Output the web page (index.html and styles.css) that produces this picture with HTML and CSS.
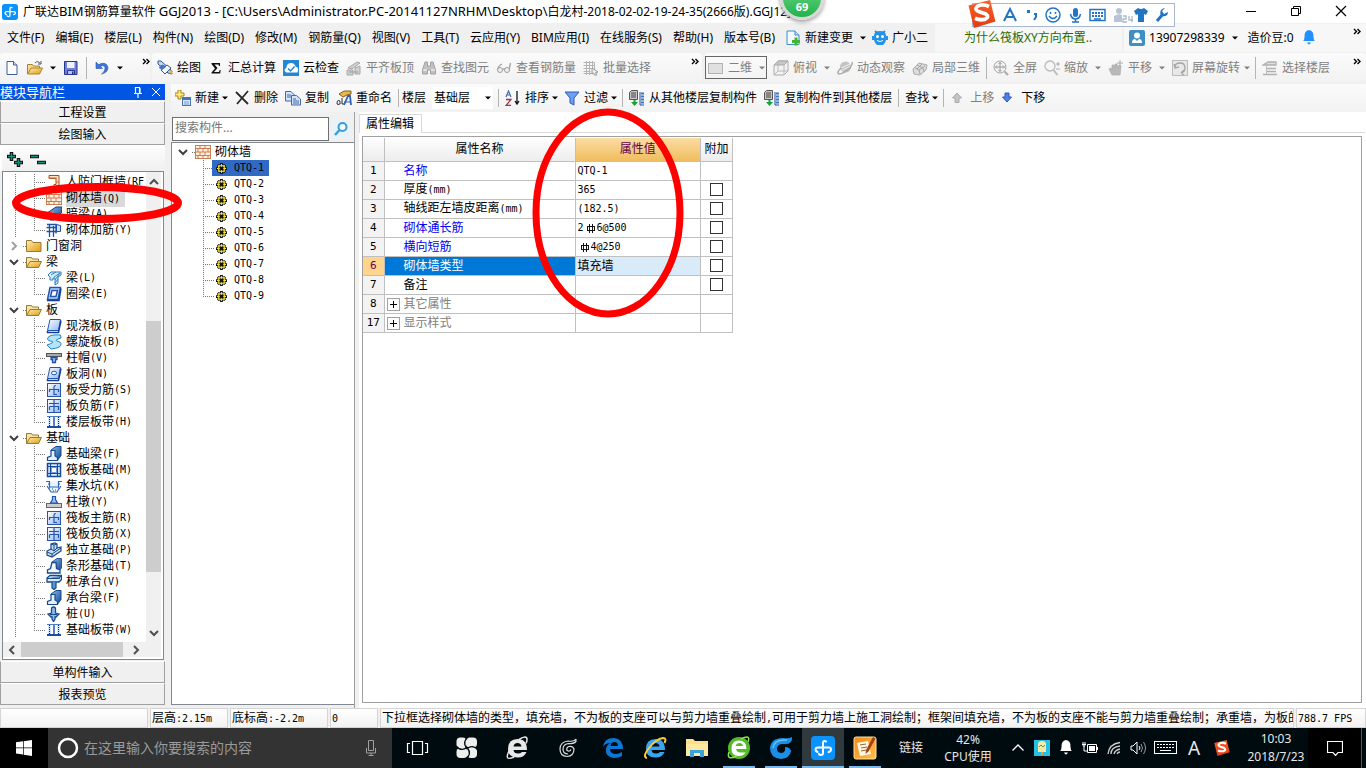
FILE: index.html
```html
<!DOCTYPE html>
<html lang="zh-CN">
<head>
<meta charset="utf-8">
<title>广联达BIM钢筋算量软件 GGJ2013</title>
<link rel="stylesheet" href="styles.css">
</head>
<body>
<svg class="defs" aria-hidden="true">
<defs>
<linearGradient id="gBlue" x1="0" y1="0" x2="1" y2="1"><stop offset="0" stop-color="#fff"/><stop offset="1" stop-color="#8fb6f2"/></linearGradient>
<linearGradient id="gDeep" x1="0" y1="0" x2="1" y2="1"><stop offset="0" stop-color="#8cc0f0"/><stop offset="1" stop-color="#0b3f8c"/></linearGradient>
<linearGradient id="gGold" x1="0" y1="0" x2="1" y2="1"><stop offset="0" stop-color="#ffeeb0"/><stop offset="1" stop-color="#e09a10"/></linearGradient>
<linearGradient id="gSogou" x1="0" y1="0" x2="0" y2="1"><stop offset="0" stop-color="#f8602c"/><stop offset="1" stop-color="#e23c10"/></linearGradient>
<linearGradient id="gPad" x1="0" y1="0" x2="1" y2="1"><stop offset="0" stop-color="#f08a1c"/><stop offset="1" stop-color="#ffc04a"/></linearGradient>
</defs>
<symbol id="logo" viewBox="0 0 24 24"><rect width="24" height="24" rx="4" fill="#0a92ff"/><path d="M15 5.500q-3-1.500-3 1.500v9.500q0 2.500-2 2.500-1.500 0-2-1M6.500 16q-2-1-2-2.500 0-2 2.500-2h11q2 0 2 2t-2.500 2.500" fill="none" stroke="#fff" stroke-width="2" stroke-linecap="round"/></symbol>
<symbol id="page" viewBox="0 0 16 16"><path d="M3 1.500h6.500l3.500 3.500v9.500h-10z" fill="#fff" stroke="#3f5f8f"/><path d="M9.500 1.500v3.500h3.500" fill="#cfe0f5" stroke="#3f5f8f"/></symbol>
<symbol id="open" viewBox="0 0 16 16"><path d="M.5 14V4.500h5l1 1.500h6v3" fill="#f6d98a" stroke="#a88432"/><path d="M.5 14l3.500-6h11.500l-3 6z" fill="url(#gGold)" stroke="#a88432"/><path d="M8 3q3-3 5 .5M14 1v3h-3" fill="none" stroke="#456"/></symbol>
<symbol id="save" viewBox="0 0 16 16"><path d="M1.500 1.500h12.500v13h-12.500z" fill="#6f83d6" stroke="#26348c"/><path d="M4 2h7.500v6H4z" fill="#eef1ff"/><path d="M4.500 10.500h7v4h-7z" fill="#b9c3ee" stroke="#26348c"/><path d="M9 11.500h1.500v2.500H9z" fill="#26348c"/></symbol>
<symbol id="undo" viewBox="0 0 16 16"><path d="M2 2v6.500h6.500L6.300 6.300q5-2 4.700 2.700-.5 3-3.500 5 6.500-1.500 6.500-6.500Q12.500 1 4.500 4.500z" fill="#3d76d8" stroke="#2456b4" stroke-width=".6"/></symbol>
<symbol id="more" viewBox="0 0 8 8"><path d="M1 1l2.500 2.500L1 6M4.500 1L7 3.500 4.500 6" fill="none" stroke="currentColor" stroke-width="1.400"/></symbol>
<symbol id="caret" viewBox="0 0 6 4"><path d="M0 .5h6L3 3.500z" fill="currentColor"/></symbol>
<symbol id="draw" viewBox="0 0 16 16"><path d="M1 1l3 0 10 9 1 4-4-1L1 4z" fill="#c2d6f5" stroke="#38588c"/><path d="M4 10l6-5 4 3-6 6z" fill="#f2f7ff" stroke="#38588c"/><path d="M2 8q1-4 5-3l2 2-4 3z" fill="#4a74bf"/><path d="M12 10l2 5 2-4z" fill="#e4b02c"/></symbol>
<symbol id="sum" viewBox="0 0 16 16"><path d="M3.500 3H12v3h-1l-.5-1.500H6.500L9.500 8l-3.500 4h5l.7-2h1l-.5 3.500H3.500v-1L7 8.500 3.500 4z" fill="#111"/></symbol>
<symbol id="cloud" viewBox="0 0 16 16"><rect width="16" height="16" fill="#2487d6"/><path d="M3.500 12.500q-4-2 0-5 0-4 4-4.500 4-.5 5 3.500 4 1 2 6z" fill="#fff"/><path d="M5 8.500l2.500 2.500L11.500 6.500" fill="none" stroke="#2487d6" stroke-width="1.500"/></symbol>
<symbol id="align" viewBox="0 0 16 16"><path d="M2 8l9-6 3 1-8 6zM1 10h6v5H1zM9 8l5-2v8H9z" fill="#d0d0d0" stroke="#a6a6a6"/><path d="M3 12h9" stroke="#999"/></symbol>
<symbol id="find" viewBox="0 0 16 16"><path d="M4 2h2.500v4h3V2H12l2.500 8v4h-5v-4h-3v4h-5v-4z" fill="#c2c2c2" stroke="#a0a0a0"/><path d="M2 10h4M10 10h4" stroke="#fff"/></symbol>
<symbol id="glasses" viewBox="0 0 16 16"><path d="M6 4Q2 6 1.500 10M14.500 3L13 10M7 9l2 0" fill="none" stroke="#a0a0a0" stroke-width="1.300"/><circle cx="4" cy="10" r="2.500" fill="#eee" stroke="#a0a0a0"/><circle cx="11" cy="10" r="2.500" fill="#eee" stroke="#a0a0a0"/></symbol>
<symbol id="batch" viewBox="0 0 16 16"><path d="M.5 2.500h11v11H.5M.5 5.500h11M.5 8.500h8M.5 11.500h7M3.500 1v14M6.500 1v14M9.500 1v7" stroke="#b4b4b4" fill="none"/><path d="M9 8l6 4-2.500.5 1.500 2.500-2.500 0-1-2-1.500 1z" fill="#eee" stroke="#999"/></symbol>
<symbol id="plane" viewBox="0 0 16 16"><rect x=".5" y="3.500" width="14" height="10" fill="#e0e0e0" stroke="#b2b2b2"/></symbol>
<symbol id="cube" viewBox="0 0 16 16"><path d="M1 5l4-4h10v10l-4 4H1z" fill="#f3f3f3" stroke="#aaa"/><path d="M1 5l4-4h10l-4 4z" fill="#c8c8c8" stroke="#aaa"/><path d="M11 5v10M5 1v10H15M5 11l-4 4" fill="none" stroke="#b8b8b8"/></symbol>
<symbol id="orbit" viewBox="0 0 16 16"><circle cx="8.500" cy="7" r="5.500" fill="#c4c4c4"/><path d="M4 8L13 4M5 10l9-4" stroke="#eee"/><path d="M4 8q-5 5-2 6 4 0 11-6 3-4 2-6" fill="none" stroke="#aaa" stroke-width="1.500"/></symbol>
<symbol id="part3d" viewBox="0 0 16 16"><path d="M1 9l6-6 8 2-1 5-6 5-6-1z" fill="#ddd" stroke="#aaa"/><path d="M3 8l4 2 1 4M7 10l6-4M5 5l6 3 1 4M10 4L5 9" fill="none" stroke="#a4a4a4"/></symbol>
<symbol id="full" viewBox="0 0 16 16"><circle cx="7" cy="7" r="6" fill="#f4f4f4" stroke="#a5a5a5"/><path d="M7 2.500v9M2.500 7h9M5.500 4L7 2.500 8.500 4M5.500 10L7 11.500 8.500 10M4 5.500L2.500 7 4 8.500M10 5.500L11.500 7 10 8.500" fill="none" stroke="#999"/><path d="M11.500 11.500L15 15" stroke="#aaa" stroke-width="2"/></symbol>
<symbol id="zoomi" viewBox="0 0 16 16"><circle cx="6" cy="6" r="5" fill="#f6f6f6" stroke="#bbb" stroke-width="1.300"/><path d="M9.500 10l4 5" stroke="#bbb" stroke-width="2"/><path d="M12 4h4M14 2v4M12 9h4" stroke="#aaa"/></symbol>
<symbol id="hand" viewBox="0 0 16 16"><path d="M4 15l-3-6 2-1 1 2V5l2 0 1 3V4h2l.5 4L11 5l2 1-1 9z" fill="#b8b8b8" stroke="#aaa" stroke-width=".7"/><path d="M12 0v6M9 3h6" stroke="#aaa"/></symbol>
<symbol id="rot" viewBox="0 0 16 16"><rect x=".5" y=".5" width="15" height="15" fill="#e8e8e8" stroke="#bbb"/><path d="M3 7q0-4 5-4 5 0 5 5 0 4-4 5M9 13l3 2M9 13l3-3M2 4l1 4 4-1" fill="none" stroke="#a4a4a4" stroke-width="1.300"/></symbol>
<symbol id="floors" viewBox="0 0 16 16"><path d="M1 5l5-3h8v3zM5 8.500h9M5 11.500h9M1 14.500h14" fill="#ddd" stroke="#b0b0b0" stroke-width="1.300"/><path d="M4.500 5v9" stroke="#c0c0c0"/></symbol>
<symbol id="new" viewBox="0 0 16 16"><path d="M3 0h3v3h3v3H6v3H3V6H0V3h3z" fill="#ffe97a" stroke="#ab8617"/><rect x="7.500" y="7.500" width="8" height="8" fill="#dbe8fb" stroke="#4874b4"/><path d="M7.500 9h8" stroke="#4874b4" stroke-width="2"/><path d="M9 12h5M9 14h5" stroke="#7897c4"/></symbol>
<symbol id="del" viewBox="0 0 16 16"><path d="M2 2l12 12M14 1L3 14" stroke="#2b2b2b" stroke-width="1.800"/></symbol>
<symbol id="copy" viewBox="0 0 16 16"><path d="M.5 1.500H6L9.500 5v6H.5z" fill="#d4e3fa" stroke="#4568a8"/><path d="M6.500 5.500h5l4 3.500v6h-9z" fill="#d4e3fa" stroke="#4568a8"/><path d="M2 5h4M2 7h4M8 9h3M8 11h6M8 13h6" stroke="#4568a8"/></symbol>
<symbol id="rename" viewBox="0 0 16 16"><path d="M3 4l5-3 7 0v3l-4 1-4 2z" fill="#e6b64a" stroke="#86601b"/><path d="M1 14q0-5 3-3v3q-3 1-3 0M6 8v6q4 0 3-3" fill="none" stroke="#333"/><path d="M8 15l4-9h2l1 9" fill="none" stroke="#3262b7" stroke-width="1.800"/><path d="M10 12h4" stroke="#3262b7"/></symbol>
<symbol id="sort" viewBox="0 0 16 16"><path d="M1 7L3.500 1 6 7M2 5h3" fill="none" stroke="#3d6cb8" stroke-width="1.200"/><path d="M1 9.500h5l-5 6h5" fill="none" stroke="#a03344" stroke-width="1.300"/><path d="M12 1v13M10 11l2 3 2-3" fill="none" stroke="#111" stroke-width="1.300"/></symbol>
<symbol id="filter" viewBox="0 0 16 16"><path d="M1 2h14L10 8v7l-4-2V8z" fill="#6f9ff0" stroke="#2a5cba"/></symbol>
<symbol id="xfer" viewBox="0 0 16 16"><path d="M.5 2.500l2-2h6v9h-8z" fill="#c8c8c8" stroke="#555"/><path d="M2 3h5M2 5h5M2 7h5" stroke="#444"/><path d="M15 3.500h-3M15 6.500h-3M15 9.500h-3M15 12.500h-3" stroke="#3c74c8" stroke-width="2"/><path d="M11 2v13h4" fill="none" stroke="#1f4f9c"/><path d="M4.500 10v2H2l3.500 4 3.500-4H6.500v-2z" fill="#15a536"/></symbol>
<symbol id="up" viewBox="0 0 16 16"><path d="M7 3l4.500 5H9v4.500H5V8H2.500z" fill="#c4c4c4" stroke="#aaa"/></symbol>
<symbol id="down" viewBox="0 0 16 16"><path d="M4 3h4v4h2.500L6 12 1.500 7H4z" fill="#4f82e8" stroke="#2a57bd"/></symbol>
<symbol id="change" viewBox="0 0 16 16"><path d="M2 1h8l4 4v9.500H2z" fill="#f4f9ff" stroke="#3d8ccc"/><path d="M10 1v4h4" fill="#bcdcf5" stroke="#3d8ccc"/><path d="M9.500 7.500h3v2.500H15v3h-2.500v2.500h-3V13H7v-3h2.500z" fill="#42b631"/></symbol>
<symbol id="robot" viewBox="0 0 16 16"><path d="M8 1q6 0 6 5h2v4l-2 0q-1 4-3 5H5q-2-1-3-5H0V6h2q0-5 6-5z" fill="#2492e6"/><path d="M3 1l2 2M13 1l-2 2" stroke="#2492e6" stroke-width="2"/><circle cx="5.500" cy="6.500" r="1.500" fill="#fff"/><circle cx="10.500" cy="6.500" r="1.500" fill="#fff"/><path d="M5 10.500q3 2 6 0" stroke="#fff" fill="none"/></symbol>
<symbol id="user" viewBox="0 0 16 16"><rect width="16" height="16" rx="2" fill="#3d8fc4"/><circle cx="8" cy="5.500" r="3" fill="#fff"/><path d="M3 13q0-4 3-4l2 2 2-2q3 0 3 4z" fill="#fff"/></symbol>
<symbol id="bell" viewBox="0 0 16 16"><path d="M8 0q5 1 4.500 7 0 3 1.500 4H2q1.500-1 1.500-4Q3 1 8 0z" fill="currentColor"/><path d="M6 12.500h4q-2 4-4 0z" fill="currentColor"/></symbol>
<symbol id="search" viewBox="0 0 16 16"><circle cx="9.500" cy="6" r="4" fill="#f2faff" stroke="#3d9bd8" stroke-width="2"/><path d="M6.500 9L2 14" stroke="#3d9bd8" stroke-width="2.500"/></symbol>
<symbol id="chev" viewBox="0 0 10 10"><path d="M1 3l4 4 4-4" fill="none" stroke="currentColor" stroke-width="2"/></symbol>
<symbol id="brick" viewBox="0 0 16 16"><rect x=".5" y="1.500" width="15" height="13" fill="#fff0df" stroke="#c87f56"/><path d="M1 4.500h14M1 8h14M1 11.500h14M5 2v2M10 2v2M3 5v3M8 5v3M13 5v3M5 8v3M10 8v3M3 12v2M8 12v2M13 12v2" stroke="#cc7c50" fill="none"/></symbol>
<symbol id="frame" viewBox="0 0 16 16"><path d="M3 1.500h10v13H8v-4h2v-6H3z" fill="#ffe4c8" stroke="#a84c1c"/><path d="M3 4h8M10 12h3M10 8h3" stroke="#c76b36"/></symbol>
<symbol id="gear" viewBox="0 0 12 12"><path d="M4.500 0h3v2L9 1l2 2-1 1.500h2v3h-2L11 9 9 11l-1.500-1v2h-3v-2L3 11 1 9l1-1.500H0v-3h2L1 3l2-2 1.500 1z" fill="#111"/><path d="M5.500 1h1v3h-1zM5.500 8h1v3h-1zM1 5.500h3v1H1zM8 5.500h3v1H8zM2.500 2.500l1.500 1 0 1-1.500-1zM9.500 2.500L8 3.500v1l1.500-1zM2.500 9.500L4 8V9zM9.500 9.500L8 8v1z" fill="#ffee22"/><rect x="3" y="3" width="6" height="6" fill="none" stroke="#f5e220" stroke-width="1.300"/></symbol>
<symbol id="fold" viewBox="0 0 16 16"><path d="M.5 13.500v-11h5l1.500 2h8v9z" fill="url(#gGold)" stroke="#957a3b"/></symbol>
<symbol id="foldo" viewBox="0 0 16 16"><path d="M.5 13.500V3.500h5l1 1.500h6v3" fill="#f9e3a0" stroke="#957a3b"/><path d="M.5 13.500l3.500-6h11.500l-3 6z" fill="url(#gGold)" stroke="#957a3b"/></symbol>
<symbol id="slab" viewBox="0 0 16 16"><path d="M4 1.500h10.500l-2 11H1.500z" fill="url(#gBlue)" stroke="#2456b0"/><path d="M1.500 13v1.500h11l2.500-12" fill="none" stroke="#123f98" stroke-width="1.500"/></symbol>
<symbol id="ring" viewBox="0 0 16 16"><path d="M4 1.500h10.500l-2.500 12H1.500z" fill="#bdd6fa" stroke="#2456b0" stroke-width="1.500"/><path d="M6 4.500h5.500l-1.500 6H4.500z" fill="#fff" stroke="#2456b0" stroke-width="1.500"/><path d="M1 14.500h12l2-12" fill="none" stroke="#123f98" stroke-width="1.500"/></symbol>
<symbol id="hole" viewBox="0 0 16 16"><path d="M4 1.500h10.500l-2 11H1.500z" fill="url(#gBlue)" stroke="#2456b0"/><path d="M1.500 13v1.500h11l2.500-12" fill="none" stroke="#123f98" stroke-width="1.500"/><ellipse cx="8" cy="7" rx="2.500" ry="1.800" fill="#fff" stroke="#1c58c4"/></symbol>
<symbol id="beam" viewBox="0 0 16 16"><path d="M2 5l3-3h10v3l-3 2v6l-3 2V8H7v2H4V7z" fill="#d8eefc" stroke="#2a7abd"/><path d="M5 5l5-3M8 7l6-4M9 10l5-7M9 13l3-4" stroke="#2a86c9" fill="none"/></symbol>
<symbol id="dbeam" viewBox="0 0 16 16"><path d="M1 7l9-6h6v5l-8 8H4V9z" fill="url(#gDeep)" stroke="#143f7c"/><path d="M1 7h7v7" fill="none" stroke="#cde" stroke-width="1"/></symbol>
<symbol id="rebar" viewBox="0 0 16 16"><path d="M.5 5.500h11M.5 9.500h11M3.500 2v13M7.500 4v11M1 2.500h9v9" fill="none" stroke="#1e50a8" stroke-width="1.300"/><path d="M10.500 2.500l4 1v6h-4z" fill="#cfe2f9" stroke="#1e50a8"/></symbol>
<symbol id="spiral" viewBox="0 0 16 16"><path d="M14.500 1Q2 0 1.500 5q0 2 5 2.500 2 1-5.500 3.500l4 4q11-1 10-5.500-.5-2-4-2.500Q8 6 15 4z" fill="#b5e4fa" stroke="#2485c2"/></symbol>
<symbol id="cap" viewBox="0 0 16 16"><rect x=".5" y="3.500" width="15" height="3" fill="#aaa" stroke="#555"/><path d="M5 7.500h6v2H9.500v3h-3v-3H5z" fill="#9cc3f0" stroke="#1b52ad" stroke-width="1.300"/></symbol>
<symbol id="pier" viewBox="0 0 16 16"><rect x=".5" y="9.500" width="15" height="4" fill="#ccc" stroke="#666"/><path d="M6.500 2.500h3v3l2 3.500h-7l2-3.500z" fill="#9cc3f0" stroke="#1b52ad" stroke-width="1.200"/></symbol>
<symbol id="net1" viewBox="0 0 16 16"><rect x="1.500" y="1.500" width="13" height="13" fill="url(#gBlue)" stroke="#2456b0"/><path d="M8 13V5q0-1.500 2-1.500M3.500 10V7.500h9V10M8 12.500h3" fill="none" stroke="#2456b0" stroke-width="1.200"/></symbol>
<symbol id="net2" viewBox="0 0 16 16"><rect x="1.500" y="1.500" width="13" height="13" fill="url(#gBlue)" stroke="#2456b0"/><path d="M8 2v12M3 5.500h10M3.500 8.500V12M3.500 8.500h9V12" fill="none" stroke="#2456b0" stroke-width="1.200"/></symbol>
<symbol id="band" viewBox="0 0 16 16"><path d="M1 2.500h14" stroke="#4d7cc8"/><path d="M1 13h14" stroke="#1a4da5" stroke-width="2"/><path d="M2 3h3v9H2zM11 3h3v9h-3z" fill="#d5e5fa"/><path d="M8 3v10" stroke="#2456b0" stroke-width="1.500"/><path d="M3.500 3v9M12.500 3v9" stroke="#222" stroke-dasharray="1 1"/></symbol>
<symbol id="fbeam" viewBox="0 0 16 16"><path d="M5 4l5-3.500h5v9L11 15z" fill="url(#gDeep)" stroke="#174a8c"/><path d="M1.500 14.500v-3L5 10V4.500h4V10l2.500 1.500v3z" fill="#e4f1fd" stroke="#174a8c" stroke-width="1.200"/></symbol>
<symbol id="raft" viewBox="0 0 16 16"><rect x="1.500" y="1.500" width="13" height="13" fill="#dcecfd" stroke="#174a9c" stroke-width="1.500"/><path d="M4.500 1v14M11.500 1v14M1 4.500h14M1 11.500h14" stroke="#174a9c" stroke-width="1.200"/><rect x="5.500" y="5.500" width="5" height="5" fill="#fff" stroke="#6c9cdc"/></symbol>
<symbol id="pit" viewBox="0 0 16 16"><path d="M0 3.500h3.500V9h9V3.500H16M1 8l4 6h6l4-6" fill="#eaf3ff" stroke="#2e67b8" stroke-width="1.200"/><path d="M3 10h1M6 11h1M9 12h1M12 10h1M7 13h1M2 6h1M13 6h1" stroke="#1955b6"/></symbol>
<symbol id="foot" viewBox="0 0 16 16"><path d="M1 9l4-2V2l4-1 2 1v4l4-1v4l-9 6-5-2z" fill="#c7def8" stroke="#164a88" stroke-width="1.200"/><path d="M5 7l3 2 3-3M8 3v6M1 10l5 2 9-6M6 12v3M5 2l3 1 3-1" fill="none" stroke="#164a88"/></symbol>
<symbol id="strip" viewBox="0 0 16 16"><path d="M6 4l5-3.500h4.500V10L12 14z" fill="url(#gDeep)" stroke="#2a5c99"/><path d="M1.500 15v-3l3-1.500L6 4.500h4l.5 6L14 12v3z" fill="#f4faff" stroke="#174a8c" stroke-width="1.300"/></symbol>
<symbol id="pcap" viewBox="0 0 16 16"><path d="M1 4l3-2.500h11.500v4L13 8H1z" fill="#d6e9fc" stroke="#164a88" stroke-width="1.300"/><path d="M1 4.500h12l2-3M6 8v6l2 1.500L10 14V8" fill="#5d94cd" stroke="#164a88" stroke-width="1.200"/></symbol>
<symbol id="pile" viewBox="0 0 16 16"><path d="M5.500 3q0-2 2-2t2 2v4l3.500 1-3 3H9v2l-1.500 2.500L6 13v-2H5L2 8l3.500-1z" fill="#8fbde9" stroke="#164a88" stroke-width="1.300"/><path d="M4 8.500h7" stroke="#164a88"/></symbol>
<symbol id="steel" viewBox="0 0 10 12"><path d="M3.500 2v9M6.500 2v9M1 8.500h8M1.500 8.500v-4M8.500 8.500v-4M1 4.500h8" fill="none" stroke="#111"/></symbol>
<symbol id="sogou" viewBox="2 1 25 26"><path d="M2 6L22 1l5 20L7 27z" fill="url(#gSogou)"/><path d="M21 7q-6-3-11 0-3 3 2 5l6 2q4 3-1 5-5 1-9-1" fill="none" stroke="#fff" stroke-width="3.500"/></symbol>
<symbol id="euro" viewBox="0 0 24 24"><path d="M3 13Q3 3 12.500 3 22 3 22 14H8.500q.5 3.500 4.500 3.500 2.500 0 4-1.500h4.500q-2 5.500-9 5.500Q3 21.500 3 13zM8.500 10.500h8q-.5-3.500-4-3.500t-4 3.500z" fill="currentColor"/></symbol>
</svg>

<header class="title">
  <svg class="i16"><use href="#logo"/></svg>
  <h1>广联达<span class="lat">BIM</span>钢筋算量软件 <span class="lat">GGJ2013 - [C:\Users\Administrator.PC-20141127NRHM\Desktop\</span>白龙村-2018-02-02-19-24-35(2666版).GGJ12]</h1>
  <div class="wins">
    <button aria-label="最小化"><svg viewBox="0 0 12 12"><path d="M1 6.500h10" stroke="#000"/></svg></button>
    <button aria-label="还原"><svg viewBox="0 0 12 12"><path d="M1.500 3.500h7v7h-7zM3.500 3V1.500h7v7H9" fill="none" stroke="#000"/></svg></button>
    <button aria-label="关闭"><svg viewBox="0 0 12 12"><path d="M1 1l10 10M11 1L1 11" fill="none" stroke="#000" stroke-width="1.200"/></svg></button>
  </div>
</header>

<nav class="menu">
  <div class="menus">
    <button>文件(F)</button><button>编辑(E)</button><button>楼层(L)</button><button>构件(N)</button><button>绘图(D)</button><button>修改(M)</button><button>钢筋量(Q)</button><button>视图(V)</button><button>工具(T)</button><button>云应用(Y)</button><button>BIM应用(I)</button><button>在线服务(S)</button><button>帮助(H)</button><button>版本号(B)</button>
  </div>
  <div class="extra">
    <button><svg class="i16"><use href="#change"/></svg>新建变更<svg class="car"><use href="#caret"/></svg></button>
    <button><svg class="i16"><use href="#robot"/></svg>广小二</button>
  </div>
  <div class="tip"><a href="#">为什么筏板XY方向布置..</a></div>
  <div class="acct">
    <button><svg class="i16"><use href="#user"/></svg>13907298339<svg class="car"><use href="#caret"/></svg></button>
    <button class="bean">造价豆:0<svg class="i16 blue"><use href="#bell"/></svg></button>
    <svg class="more"><use href="#more"/></svg>
  </div>
</nav>

<div class="bar">
  <div class="grp file">
    <button aria-label="新建"><svg class="i16"><use href="#page"/></svg></button>
    <button aria-label="打开"><svg class="i16"><use href="#open"/></svg><svg class="car"><use href="#caret"/></svg></button>
    <button aria-label="保存"><svg class="i16"><use href="#save"/></svg></button>
    <i class="sep"></i>
    <button aria-label="撤销"><svg class="i16"><use href="#undo"/></svg><svg class="car"><use href="#caret"/></svg></button>
    <svg class="more"><use href="#more"/></svg>
  </div>
  <div class="grp ops">
    <button><svg class="i16"><use href="#draw"/></svg>绘图</button>
    <button><svg class="i16"><use href="#sum"/></svg>汇总计算</button>
    <button><svg class="i16"><use href="#cloud"/></svg>云检查</button>
    <button class="off"><svg class="i16"><use href="#align"/></svg>平齐板顶</button>
    <button class="off"><svg class="i16"><use href="#find"/></svg>查找图元</button>
    <button class="off"><svg class="i16"><use href="#glasses"/></svg>查看钢筋量</button>
    <button class="off"><svg class="i16"><use href="#batch"/></svg>批量选择</button>
    <svg class="more"><use href="#more"/></svg>
  </div>
  <div class="grp view">
    <button class="off boxed"><svg class="i16"><use href="#plane"/></svg>二维<svg class="car"><use href="#caret"/></svg></button>
    <button class="off"><svg class="i16"><use href="#cube"/></svg>俯视<svg class="car"><use href="#caret"/></svg></button>
    <button class="off"><svg class="i16"><use href="#orbit"/></svg>动态观察</button>
    <button class="off"><svg class="i16"><use href="#part3d"/></svg>局部三维</button>
    <i class="sep"></i>
    <button class="off"><svg class="i16"><use href="#full"/></svg>全屏</button>
    <button class="off"><svg class="i16"><use href="#zoomi"/></svg>缩放<svg class="car"><use href="#caret"/></svg></button>
    <button class="off"><svg class="i16"><use href="#hand"/></svg>平移<svg class="car"><use href="#caret"/></svg></button>
    <button class="off near"><svg class="i16"><use href="#rot"/></svg>屏幕旋转<svg class="car"><use href="#caret"/></svg></button>
    <i class="sep"></i>
    <button class="off"><svg class="i16"><use href="#floors"/></svg>选择楼层</button>
    <svg class="more"><use href="#more"/></svg>
  </div>
</div>

<main class="main">
  <aside class="nav">
    <div class="navhead"><h2>模块导航栏</h2>
      <svg viewBox="0 0 12 12"><path d="M3.500 7V1.500h4V7M2 7.500h8M6 8v4M8 2v5" fill="none" stroke="#fff" stroke-width="1.200"/></svg>
      <svg viewBox="0 0 12 12"><path d="M2 2l8 8M10 2l-8 8" stroke="#fff"/></svg>
    </div>
    <div class="stack"><button>工程设置</button><button>绘图输入</button></div>
    <div class="expand">
      <svg viewBox="0 0 40 16"><path d="M0 4.500h9M4.500 0v9M7 10.500h9M11.500 6v9M23 4.500h9M30 10.500h9" stroke="#111" stroke-width="3.500"/><path d="M1 4.500h7M4.500 1v7M8 10.500h7M11.500 7v7M24 4.500h7M31 10.500h7" stroke="#0f8f7c" stroke-width="1.500"/></svg>
    </div>
    <div class="treebox">
      <ul class="tree mods">
        <li><svg class="i16"><use href="#frame"/></svg>人防门框墙<code>(RF</code></li>
        <li><svg class="i16"><use href="#brick"/></svg><span class="cur">砌体墙<code>(Q)</code></span></li>
        <li><svg class="i16"><use href="#dbeam"/></svg>暗梁<code>(A)</code></li>
        <li class="last"><svg class="i16"><use href="#rebar"/></svg>砌体加筋<code>(Y)</code></li>
        <li class="dir shut"><svg class="ch"><use href="#chev"/></svg><svg class="i16"><use href="#fold"/></svg>门窗洞</li>
        <li class="dir"><svg class="ch"><use href="#chev"/></svg><svg class="i16"><use href="#foldo"/></svg>梁</li>
        <li><svg class="i16"><use href="#beam"/></svg>梁<code>(L)</code></li>
        <li class="last"><svg class="i16"><use href="#ring"/></svg>圈梁<code>(E)</code></li>
        <li class="dir"><svg class="ch"><use href="#chev"/></svg><svg class="i16"><use href="#foldo"/></svg>板</li>
        <li><svg class="i16"><use href="#slab"/></svg>现浇板<code>(B)</code></li>
        <li><svg class="i16"><use href="#spiral"/></svg>螺旋板<code>(B)</code></li>
        <li><svg class="i16"><use href="#cap"/></svg>柱帽<code>(V)</code></li>
        <li><svg class="i16"><use href="#hole"/></svg>板洞<code>(N)</code></li>
        <li><svg class="i16"><use href="#net1"/></svg>板受力筋<code>(S)</code></li>
        <li><svg class="i16"><use href="#net2"/></svg>板负筋<code>(F)</code></li>
        <li class="last"><svg class="i16"><use href="#band"/></svg>楼层板带<code>(H)</code></li>
        <li class="dir"><svg class="ch"><use href="#chev"/></svg><svg class="i16"><use href="#foldo"/></svg>基础</li>
        <li><svg class="i16"><use href="#fbeam"/></svg>基础梁<code>(F)</code></li>
        <li><svg class="i16"><use href="#raft"/></svg>筏板基础<code>(M)</code></li>
        <li><svg class="i16"><use href="#pit"/></svg>集水坑<code>(K)</code></li>
        <li><svg class="i16"><use href="#pier"/></svg>柱墩<code>(Y)</code></li>
        <li><svg class="i16"><use href="#net1"/></svg>筏板主筋<code>(R)</code></li>
        <li><svg class="i16"><use href="#net2"/></svg>筏板负筋<code>(X)</code></li>
        <li><svg class="i16"><use href="#foot"/></svg>独立基础<code>(P)</code></li>
        <li><svg class="i16"><use href="#strip"/></svg>条形基础<code>(T)</code></li>
        <li><svg class="i16"><use href="#pcap"/></svg>桩承台<code>(V)</code></li>
        <li><svg class="i16"><use href="#fbeam"/></svg>承台梁<code>(F)</code></li>
        <li><svg class="i16"><use href="#pile"/></svg>桩<code>(U)</code></li>
        <li class="last"><svg class="i16"><use href="#band"/></svg>基础板带<code>(W)</code></li>
      </ul>
      <div class="vbar"><svg class="flip"><use href="#chev"/></svg><i></i><svg><use href="#chev"/></svg></div>
      <div class="hbar"><svg class="left"><use href="#chev"/></svg><i></i><svg class="right"><use href="#chev"/></svg></div>
    </div>
    <div class="stack"><button>单构件输入</button><button>报表预览</button></div>
  </aside>

  <section class="work">
    <div class="bar2">
      <button><svg class="i16"><use href="#new"/></svg>新建<svg class="car"><use href="#caret"/></svg></button>
      <button><svg class="i16"><use href="#del"/></svg>删除</button>
      <button><svg class="i16"><use href="#copy"/></svg>复制</button>
      <button><svg class="i16"><use href="#rename"/></svg>重命名</button>
      <i class="sep"></i>
      <label for="floor">楼层</label>
      <div class="combo"><select id="floor"><option>基础层</option></select><svg class="car"><use href="#caret"/></svg></div>
      <i class="sep"></i>
      <button><svg class="i16"><use href="#sort"/></svg>排序<svg class="car"><use href="#caret"/></svg></button>
      <button><svg class="i16"><use href="#filter"/></svg>过滤<svg class="car"><use href="#caret"/></svg></button>
      <i class="sep"></i>
      <button><svg class="i16"><use href="#xfer"/></svg>从其他楼层复制构件</button>
      <button><svg class="i16"><use href="#xfer"/></svg>复制构件到其他楼层</button>
      <i class="sep"></i>
      <button>查找<svg class="car"><use href="#caret"/></svg></button>
      <i class="sep"></i>
      <button class="off"><svg class="i16"><use href="#up"/></svg>上移</button>
      <button><svg class="i16"><use href="#down"/></svg>下移</button>
    </div>
    <div class="panes">
      <div class="parts">
        <div class="find"><input type="text" placeholder="搜索构件..." aria-label="搜索构件"><button aria-label="搜索"><svg class="i16"><use href="#search"/></svg></button></div>
        <ul class="tree list">
          <li class="dir"><svg class="ch"><use href="#chev"/></svg><svg class="i16"><use href="#brick"/></svg>砌体墙</li>
          <li><span class="sel"><svg class="gear"><use href="#gear"/></svg><code>QTQ-1</code></span></li>
          <li><span><svg class="gear"><use href="#gear"/></svg><code>QTQ-2</code></span></li>
          <li><span><svg class="gear"><use href="#gear"/></svg><code>QTQ-3</code></span></li>
          <li><span><svg class="gear"><use href="#gear"/></svg><code>QTQ-4</code></span></li>
          <li><span><svg class="gear"><use href="#gear"/></svg><code>QTQ-5</code></span></li>
          <li><span><svg class="gear"><use href="#gear"/></svg><code>QTQ-6</code></span></li>
          <li><span><svg class="gear"><use href="#gear"/></svg><code>QTQ-7</code></span></li>
          <li><span><svg class="gear"><use href="#gear"/></svg><code>QTQ-8</code></span></li>
          <li class="last"><span><svg class="gear"><use href="#gear"/></svg><code>QTQ-9</code></span></li>
        </ul>
      </div>
      <div class="props">
        <div class="tabs"><button>属性编辑</button></div>
        <div class="sheet">
          <table>
            <thead><tr><th class="n"></th><th class="k">属性名称</th><th class="v">属性值</th><th class="a">附加</th></tr></thead>
            <tbody>
              <tr><th>1</th><td class="key">名称</td><td><code>QTQ-1</code></td><td></td></tr>
              <tr><th>2</th><td>厚度<code>(mm)</code></td><td><code>365</code></td><td><input type="checkbox" aria-label="附加 厚度"></td></tr>
              <tr><th>3</th><td>轴线距左墙皮距离<code>(mm)</code></td><td><code>(182.5)</code></td><td><input type="checkbox" aria-label="附加 轴线距左墙皮距离"></td></tr>
              <tr><th>4</th><td class="key">砌体通长筋</td><td><code>2<svg class="steel"><use href="#steel"/></svg>6@500</code></td><td><input type="checkbox" aria-label="附加 砌体通长筋"></td></tr>
              <tr><th>5</th><td class="key">横向短筋</td><td><code><svg class="steel"><use href="#steel"/></svg>4@250</code></td><td><input type="checkbox" aria-label="附加 横向短筋"></td></tr>
              <tr class="on"><th>6</th><td>砌体墙类型</td><td>填充墙</td><td><input type="checkbox" aria-label="附加 砌体墙类型"></td></tr>
              <tr><th>7</th><td>备注</td><td></td><td><input type="checkbox" aria-label="附加 备注"></td></tr>
              <tr><th>8</th><td class="more-row"><button aria-label="展开其它属性"><svg viewBox="0 0 11 11"><path d="M2 5.500h7M5.500 2v7" stroke="#000"/></svg></button>其它属性</td><td></td><td></td></tr>
              <tr><th>17</th><td class="more-row"><button aria-label="展开显示样式"><svg viewBox="0 0 11 11"><path d="M2 5.500h7M5.500 2v7" stroke="#000"/></svg></button>显示样式</td><td></td><td></td></tr>
            </tbody>
          </table>
        </div>
      </div>
    </div>
  </section>
</main>

<footer class="status">
  <span class="s1"></span><span class="s2">层高<code>:2.15m</code></span><span class="s3">底标高<code>:-2.2m</code></span><span class="s4"><code>0</code></span>
  <span class="msg">下拉框选择砌体墙的类型，填充墙，不为板的支座可以与剪力墙重叠绘制<code>,</code>可用于剪力墙上施工洞绘制；框架间填充墙，不为板的支座不能与剪力墙重叠绘制；承重墙，为板的</span>
  <span class="s5"><code>788.7 FPS</code></span>
</footer>

<div class="task">
  <button class="start" aria-label="开始"><svg viewBox="0 0 16 16"><path d="M0 2.300L7 1.300v6.200H0zM7.700 1.200L16 0v7.500H7.700zM0 8.300h7v6.300l-7-1zM7.700 8.300H16V16l-8.300-1.200z" fill="#fff"/></svg></button>
  <div class="ask">
    <svg class="ringo" viewBox="0 0 22 22"><circle cx="11" cy="11" r="9" fill="none" stroke="#fff" stroke-width="2.500"/></svg>
    <input type="text" placeholder="在这里输入你要搜索的内容" aria-label="搜索">
    <svg class="i16" viewBox="0 0 16 16"><path d="M5.500.5h5v10h-5zM3.500 8v5h9V8M8 13v3M5.500 15.500h5" fill="none" stroke="#a0a0a0"/></svg>
  </div>
  <div class="apps">
    <button aria-label="任务视图"><svg viewBox="0 0 24 24"><path d="M7.500 5.500h10v13h-10zM5 7.500H2.500v9H5M20 7.500h2.500v9H20" fill="none" stroke="#fff" stroke-width="1.200"/></svg></button>
    <button aria-label="应用"><svg viewBox="0 0 24 24"><rect x="1.500" y="1.500" width="10" height="11" rx="4" fill="#eee"/><rect x="11" y="1.500" width="11" height="10" rx="4" fill="#eee"/><rect x="12" y="11" width="10" height="11" rx="4" fill="#eee"/><rect x="1.500" y="12" width="11" height="10" rx="4" fill="#eee"/><path d="M11.500 12Q7 6 13 1M12 12.500Q18 8 23 14M12.500 12q4.500 6-1.500 11M12 11.500Q6 16 1 10" stroke="#000b0f" stroke-width="1.300" fill="none"/></svg></button>
    <button aria-label="浏览器"><svg viewBox="0 0 24 24" color="#e8e8e8"><use href="#euro"/><path d="M5 13Q-2 26 9 21M14 3.500q8-5 8 0 0 2-1 4" fill="none" stroke="#e8e8e8" stroke-width="1.500"/></svg></button>
    <button aria-label="广联达"><svg viewBox="0 0 24 24"><path d="M21 3q-2 3-8 2-8 1-8 8 0 7 7 7.500 7-.5 7-7.500-1-3-5-2.500-3 1-2 4 3 1.500 4-1M21 3q1 5-7 4.500-6 .5-6 5.500 0 5 5 5" fill="none" stroke="#ddd" stroke-width="1.200"/></svg></button>
    <button aria-label="Edge"><svg viewBox="0 0 24 24"><path d="M2 11Q3 2 13 2q9 1 9 11H9q0 5 6 5 3 0 6-2v4q-3 2-8 2Q4 21 5 13q1-5 5-6-6 0-8 4zm7.500-1H17q0-4-3.500-4T9.500 10z" fill="#0a78d7"/></svg></button>
    <button aria-label="Internet Explorer"><svg viewBox="0 0 24 24" color="#3ba4ef"><use href="#euro"/><path d="M4 22Q-1 21 6 12 13 3 20 2q4 0 1.500 5" fill="none" stroke="#fbc836" stroke-width="2"/></svg></button>
    <button aria-label="文件资源管理器"><svg viewBox="0 0 24 24"><path d="M1 20V3h7l2 2h13v15z" fill="#ffe088"/><path d="M1 8h22v12H1z" fill="#ffe9a0"/><path d="M5 21v-7h14v7h-4v-4H9v4z" fill="#3ba3dc"/></svg></button>
    <button class="run" aria-label="360浏览器"><svg viewBox="0 0 24 24"><circle cx="12" cy="12" r="11" fill="#56bb28"/><path d="M4.500 12.500q0-8 7.500-8t7.500 8.500H9q1 3.500 4.500 3.500h5q-2 3.500-7 3.500-7 0-7-7.500zM8.500 10H16q-.5-3-3.500-3T8.500 10z" fill="#fff"/><path d="M2 16q-3 9 8 4M14 3q10-5 7 3" fill="none" stroke="#8be34e" stroke-width="1.500"/></svg></button>
    <button class="run" aria-label="广联达G"><svg viewBox="0 0 24 24"><path d="M23 1q1 8-9 7-6 0-6 5 0 4 5 4 4-1 3-6 5 0 6 4-1 7-10 8-11-1-11-11Q2 2 14 2q6 1 9-1z" fill="#1b8fe8"/><path d="M4 12Q5 3 18 4" fill="none" stroke="#62c4fa" stroke-width="1.500"/></svg></button>
    <button class="run active" aria-label="GGJ2013"><svg><use href="#logo"/></svg></button>
    <button class="run" aria-label="写字板"><svg viewBox="0 0 24 24"><rect x="1" y="1" width="22" height="22" rx="2" fill="url(#gPad)" stroke="#ffe0a0"/><path d="M4 7l11-2 3 13-11 2z" fill="#fff9e8"/><path d="M7 9l6-1M8 12l6-1M8 15l5-1" stroke="#9a6320"/><path d="M20 1l2.500 1.500-7 13-3 2.500.5-4z" fill="#a8401c"/></svg></button>
  </div>
  <span class="link">链接</span>
  <div class="cpu">42%<br>CPU使用</div>
  <div class="tray">
    <svg class="i16" viewBox="0 0 16 16"><path d="M2.500 10.500L8 5l5.500 5.500" fill="none" stroke="#fff" stroke-width="1.300"/></svg>
    <svg class="i16" viewBox="0 0 16 16"><rect width="16" height="16" fill="#24c0e6"/><path d="M4 12V4q0-3 4-3t4 3v8z" fill="#f6eaa0"/><path d="M8 12v3" stroke="#d3a45a" stroke-width="2"/><path d="M5 7l2-2 2 2 2-2" fill="none" stroke="#3f9b98"/></svg>
    <svg class="i16 white"><use href="#bell"/></svg>
    <svg class="i16" viewBox="0 0 16 16"><path d="M5.500 4.500h9v8h-9zM15.500 7v3M0 4.500h4M1 2v3q1 4 2 0V2M2 7v4h3" fill="none" stroke="#fff"/><path d="M7 6h6v5H7z" fill="#fff"/></svg>
    <svg class="i16" viewBox="0 0 16 16"><path d="M2 14Q3 4 14 2.500M5 14q0-7 9-8M8 14q1-4 6-5M11 14q1-2 3-2" fill="none" stroke="#ccc" stroke-width="1.300"/></svg>
    <svg class="i16" viewBox="0 0 16 16"><path d="M1 6h2l4-4v12l-4-4H1zM9 6q2 2 0 4" fill="none" stroke="#fff"/><path d="M11 4q3 4 0 8M13.500 2q4 6 0 12" fill="none" stroke="#999"/></svg>
    <svg class="kb" viewBox="0 0 24 16"><rect x=".5" y="1.500" width="22" height="12" fill="none" stroke="#fff"/><path d="M3 4.500h17M3 7.500h17" stroke="#fff" stroke-dasharray="2 1"/><path d="M6 10.500h11" stroke="#fff"/></svg>
    <b>A</b>
    <svg class="i16"><use href="#sogou"/></svg>
  </div>
  <div class="clock">10:03<br>2018/7/23</div>
  <button class="note" aria-label="通知"><svg class="i16" viewBox="0 0 16 16"><path d="M.5 1.500h15v11H11l-2.500 3-2.500-3H.5z" fill="none" stroke="#fff" stroke-width="1.200"/></svg></button>
</div>

<div class="ball">69</div>
<div class="ime">
  <svg class="big"><use href="#sogou"/></svg>
  <svg class="keys" viewBox="0 0 166 16" fill="none" stroke="#2275c4" stroke-width="2">
    <path d="M1 14L7 2l6 12M4 10h6"/><path d="M24 3h3v3h-3z" fill="#2275c4" stroke="none"/><path d="M31 7h2v3l-2 3"/>
    <circle cx="50" cy="8" r="7" stroke-width="1.500"/><path d="M46 9q4 5 8 0M47.500 5v2M52.500 5v2" stroke-width="1.500"/>
    <rect x="70" y="1" width="5" height="9" rx="2.500" fill="#2275c4" stroke="none"/><path d="M67.500 7q1 5 5 5t5-5M72.500 12v3M69 15h7" stroke-width="1.500"/>
    <rect x="87" y="2.500" width="15" height="11" stroke-width="1.500"/><path d="M89 6h11M89 9h11" stroke-dasharray="2 1"/><path d="M91 12h7" stroke-width="1.500"/>
    <g stroke="none" fill="#b8c4d6"><circle cx="116" cy="4" r="3"/><path d="M111 15V9q5-3 8-1v7z"/></g><path d="M120 9h3v3h-3v3h4M126 9v4h4M129 9v6" stroke="#aab8ce" stroke-width="1.300"/>
    <path d="M131 4l4-3q3 2 6 0l4 3-2 4-2-1v8h-6V7l-2 1z" fill="#2275c4" stroke="none"/>
    <path d="M154 14l6-7" stroke-width="3"/><path d="M162 1l-3 3 2 3 4-2q0 5-6 4-3-2-1-6 2-2 4-2z" fill="#2275c4" stroke="none"/>
  </svg>
</div>
<svg class="mark m1" viewBox="0 0 170 40"><ellipse cx="85" cy="20" rx="81" ry="16"/></svg>
<svg class="mark m2" viewBox="0 0 152 211"><ellipse cx="76" cy="105" rx="72" ry="101"/></svg>
</body>
</html>
```
FILE: styles.css
```css
* { box-sizing: border-box; }
body {
  margin: 0; height: 100vh; overflow: hidden; position: relative;
  display: flex; flex-direction: column;
  background: #f0f0f0; color: #000;
  font: 12px/16px "Noto Sans", "Noto Sans CJK SC", sans-serif;
}
button, input, select { font: inherit; color: inherit; margin: 0; }
button { border: 0; padding: 0; background: none; display: flex; align-items: center; white-space: nowrap; }
h1, h2 { margin: 0; font-size: 12px; font-weight: 400; white-space: nowrap; }
ul { list-style: none; margin: 0; padding: 0; }
code { font: 10px/16px "DejaVu Sans Mono", monospace; white-space: pre; }
svg { flex: none; display: block; }
.defs { position: absolute; width: 0; height: 0; }
.i16 { width: 16px; height: 16px; }
.car { width: 6px; height: 4px; }
.more { width: 8px; height: 8px; }
.sep { width: 1px; height: 22px; background: #b4b4b4; flex: none; }
.off { color: #808080; }
.blue { color: #1e90ff; }
.white { color: #fff; }

.title { height: 23px; flex: none; display: flex; align-items: center; gap: 5px; padding: 0 19px 0 2px; background: #fff; }
.title h1 { flex: 1; overflow: hidden; }
.lat { font-size: 13px; }
.wins { display: flex; gap: 33px; padding-bottom: 2px; }
.wins svg { width: 12px; height: 12px; }

.menu { height: 30px; flex: none; display: flex; align-items: center; padding-left: 7px; }
.menus { display: flex; gap: 11px; margin-right: 10px; }
.extra { display: flex; gap: 6px; }
.extra button { gap: 4px; }
.extra .car { margin-left: 3px; }
.tip { margin-left: 7px; height: 28px; padding: 6px 0 0 29px; width: 187px; background: #f7f7f7; border-radius: 3px; }
.tip a { color: #2b6a00; text-decoration: none; white-space: nowrap; }
.acct { flex: 1; display: flex; align-items: center; gap: 10px; height: 28px; margin-left: 2px; padding: 0 5px; background: #f7f7f7; }
.acct button { gap: 4px; }
.acct .car { margin-left: 3px; }
.bean .i16 { margin-left: 3px; }
.acct .more, .view .more { margin: 0 0 12px auto; }

.bar { height: 31px; flex: none; display: flex; }
.grp { display: flex; align-items: center; gap: 7px; height: 29px; background: linear-gradient(#fbfbfb, #f2f2f2); border-radius: 3px; }
.grp button { gap: 4px; }
.grp .car { margin: 0 0 0 3px; }
.file { padding-left: 4px; width: 150px; margin-right: 2px; }
.file .more { margin: 0 0 12px auto; }
.ops { padding-left: 5px; width: 550px; margin-right: 3px; }
.ops .more { margin: 0 3px 12px auto; }
.view { flex: 1; padding-right: 5px; }
.view button, .view .sep { flex: none; }
.view .sep { margin: 0 -1px; }
.boxed { border: 1px solid #666; height: 23px; width: 62px; padding-left: 2px; margin-right: -1px; }
.grp .near .car { margin: 0 -1px 0 0; }

.main { flex: 1; min-height: 0; display: flex; }
.nav { width: 165px; flex: none; display: flex; flex-direction: column; margin-right: 6px; padding-bottom: 3px; }
.navhead { height: 16px; flex: none; display: flex; align-items: center; gap: 6px; padding-right: 3px; background: #0055e5; color: #fff; }
.navhead h2 { flex: 1; font-size: 13px; line-height: 15px; }
.navhead svg { width: 12px; height: 12px; }
.stack { padding-top: 1px; }
.stack button { width: 100%; height: 22px; justify-content: center; border: 1px solid #a0a0a0; border-top-color: #fff; padding-top: 1px; }
.expand { height: 26px; flex: none; padding: 7px 5px 0; border-left: 2px solid #fff; background: linear-gradient(#fdfdfd, #f0f0f0); }
.expand svg { width: 40px; height: 16px; }
.treebox { flex: 1; min-height: 0; margin: 0 1px 0 2px; border: 1px solid #828790; background: #fff; display: grid; grid-template: minmax(0, 1fr) 15px / minmax(0, 1fr) 15px; padding: 0 2px 2px 0; }
.tree li { display: flex; align-items: center; height: 16px; white-space: nowrap;
  --v: repeating-linear-gradient(#777 0 1px, transparent 1px 2px);
  --h: repeating-linear-gradient(90deg, #777 0 1px, transparent 1px 2px); }
.tree .i16 { margin-right: 4px; }
.mods { overflow: hidden; padding-top: 2px; }
.mods li { padding-left: 43px;
  background: var(--v) 12px 0 / 1px 16px no-repeat, var(--v) 31px 0 / 1px 16px no-repeat, var(--h) 31px 8px / 11px 1px no-repeat; }
.mods li.last { background: var(--v) 12px 0 / 1px 16px no-repeat, var(--v) 31px 0 / 1px 8px no-repeat, var(--h) 31px 8px / 11px 1px no-repeat; }
.mods li.dir { padding-left: 6px; background: var(--h) 20px 8px / 3px 1px no-repeat; }
.ch { width: 10px; height: 10px; margin-right: 7px; color: #404040; }
.shut .ch { transform: rotate(-90deg); color: #a0a0a0; }
.cur { background: #d9d9d9; padding-right: 5px; }
.vbar { background: #f0f0f0; display: flex; flex-direction: column; align-items: center; padding: 5px 0 4px; color: #505050; }
.vbar svg, .hbar svg { width: 10px; height: 10px; }
.vbar i { width: 100%; height: 251px; margin: auto 0 56px; background: #cdcdcd; }
.hbar { grid-column: 1 / 3; background: #f0f0f0; display: flex; align-items: center; padding: 0 20px 0 4px; gap: 4px; color: #505050; }
.hbar i { width: 102px; height: 15px; background: #cdcdcd; margin-right: auto; }
.flip { transform: rotate(180deg); }
.left { transform: rotate(90deg); }
.right { transform: rotate(-90deg); }

.work { flex: 1; min-width: 0; display: flex; flex-direction: column; }
.bar2 { height: 28px; flex: none; display: flex; align-items: center; gap: 7px; padding-left: 4px; background: linear-gradient(#fbfbfb, #f2f2f2); }
.bar2 button { gap: 4px; flex: none; }
.bar2 .car { margin: 0 -1px 0 -1px; }
.bar2 label { margin-left: -3px; }
.bar2 .sep { height: 18px; margin: 0 -1px; }
.bar2 .combo { display: flex; align-items: center; width: 61px; height: 22px; background: #fff; padding-right: 3px; margin: 0 -1px; }
.combo select { appearance: none; border: 0; padding: 0 2px; background: none; flex: 1; min-width: 0; height: 20px; }
.panes { flex: 1; min-height: 0; display: flex; }
.parts { width: 184px; flex: none; display: flex; flex-direction: column; padding-top: 5px; padding-bottom: 3px; border-right: 1px solid #a0a0a0; }
.find { display: flex; gap: 4px; padding-left: 1px; }
.find input { width: 157px; height: 24px; border: 1px solid #6f6f6f; background: #fff; padding: 0 2px 3px; border-radius: 0; }
.find input::placeholder { color: #767676; }
.find button { width: 16px; height: 16px; margin: 4px 0; background: #e4f3fc; }
.list { flex: 1; margin-top: 1px; border: 1px solid #828790; border-right: 0; background: #fff; padding-top: 1px; }
.list li { padding-left: 40px; background: var(--v) 31px 0 / 1px 16px no-repeat, var(--h) 31px 8px / 11px 1px no-repeat; }
.list li.last { background: var(--v) 31px 0 / 1px 8px no-repeat, var(--h) 31px 8px / 11px 1px no-repeat; }
.list li.dir { padding-left: 6px; background: var(--h) 20px 8px / 3px 1px no-repeat; }
.list span { display: flex; align-items: center; gap: 7px; padding: 0 5px 0 4px; height: 16px; }
.list .sel { background: #316ac5; }
.gear { width: 11px; height: 11px; }

.props { flex: 1; min-width: 0; display: flex; flex-direction: column; margin-left: 4px; padding: 2px 1px 5px 0; background: #fff; }
.tabs { display: flex; height: 19px; flex: none; border-bottom: 1px solid #d9d9d9; }
.tabs button { width: 63px; height: 19px; padding: 0 6px 1px; border: 1px solid #d9d9d9; border-bottom: 0; background: #fff; }
.sheet { flex: 1; margin: 3px 3px 0; border: 1px solid #a0a0a0; padding-top: 1px; }
table { border-collapse: collapse; table-layout: fixed; width: 370px; }
th, td { height: 19px; padding: 0; border: 1px solid #c0c0c0; font-weight: 400; line-height: 16px; white-space: nowrap; text-align: left; }
tr > :first-child { border-left: 0; }
thead th { height: 23px; text-align: center; border-top: 0; background: linear-gradient(#fdfdfd, #ededed); }
tbody th { text-align: center; background: #f3f3f3; font: 11px/16px "DejaVu Sans Mono", monospace; }
.n { width: 21px; } .k { width: 191px; } .a { width: 32px; }
thead .v { background: linear-gradient(#fbdca3, #f0bd5e); color: #640050; }
td:nth-child(2) { padding-left: 19px; }
td:nth-child(3) { padding-left: 2px; }
td:nth-child(4) { text-align: center; }
td input { appearance: none; display: block; width: 13px; height: 13px; margin: 0 auto; border: 1px solid #333; background: #fff; }
.key { color: #0000f0; }
.on th { background: #ffd48c; color: #640050; }
.on td:nth-child(2) { background: #0078d7; color: #fff; }
.on td:nth-child(3) { background: #d9eaf8; }
.steel { display: inline-block; width: 10px; height: 12px; margin: 0 1px 0 2px; vertical-align: -3px; }
td.more-row { padding-left: 2px; color: #808080; }
.more-row button { display: inline-block; width: 13px; height: 13px; border: 1px solid #a0a0a0; background: #fff; margin-right: 4px; vertical-align: -2px; }
.more-row svg { width: 11px; height: 11px; }

.status { height: 20px; flex: none; display: flex; gap: 2px; }
.status span { border: 1px solid #d4d4d4; background: linear-gradient(#fff, #f2f2f2); padding: 1px 0 0 1px; white-space: nowrap; overflow: hidden; flex: none; }
.status .s1 { width: 148px; } .status .s2 { width: 78px; } .status .s3 { width: 98px; } .status .s4 { width: 48px; }
.status .msg { flex: 1; min-width: 0; }
.status .s5 { width: 70px; }

.task { height: 40px; flex: none; display: flex; align-items: center; background: #000b0f; color: #e6e6e6; }
.start { width: 48px; height: 40px; justify-content: center; background: #000; }
.start svg { width: 16px; height: 16px; }
.ask { width: 344px; height: 40px; display: flex; align-items: center; gap: 5px; padding: 0 13px 0 9px; background: #333; }
.ringo { width: 22px; height: 22px; }
.ask input { flex: 1; min-width: 0; border: 0; background: none; font-size: 14px; padding: 0; }
.ask input::placeholder { color: #9a9a9a; }
.apps { display: flex; }
.apps button { width: 42px; height: 40px; justify-content: center; }
.apps button:nth-child(-n+4) { width: 50px; }
.apps .run { background: linear-gradient(#76b9ed, #76b9ed) center bottom / 32px 2px no-repeat; }
.apps .active { background: linear-gradient(#76b9ed, #76b9ed) center bottom / 100% 2px no-repeat #30393d; }
.apps svg { width: 24px; height: 24px; }
.link { margin-left: 13px; }
.cpu { margin-left: 20px; text-align: center; width: 50px; white-space: nowrap; line-height: 17px; }
.tray { display: flex; align-items: center; gap: 8px; margin-left: 17px; }
.kb { width: 24px; height: 16px; }
.tray b { font-size: 19px; font-weight: 400; width: 16px; text-align: center; margin-right: 4px; }
.clock { margin-left: auto; width: 64px; text-align: center; line-height: 18px; }
.note { width: 54px; height: 40px; justify-content: center; background: #000; border-right: 1px solid #555; margin-right: 4px; }

.ball { position: absolute; left: 780px; top: -24px; width: 44px; height: 44px; border-radius: 50%; border: 3px solid #d8d8d8; background: linear-gradient(#7edc92, #20b34a); box-shadow: 0 2px 4px #999; color: #fff; font: bold 11px/16px "Noto Sans", sans-serif; text-align: center; padding-top: 20px; }
.ime { position: absolute; left: 972px; top: 3px; width: 203px; height: 24px; border: 1px solid #a8b8d4; background: #fff; padding: 3px 5px 3px 29px; }
.big { position: absolute; left: -5px; top: -4px; width: 28px; height: 28px; }
.keys { width: 168px; height: 16px; }
.mark { position: absolute; pointer-events: none; fill: none; stroke: #f00; stroke-width: 8; }
.m1 { left: 12px; top: 183px; width: 170px; height: 40px; }
.m2 { left: 532px; top: 108px; width: 152px; height: 211px; stroke-width: 7; }
```
